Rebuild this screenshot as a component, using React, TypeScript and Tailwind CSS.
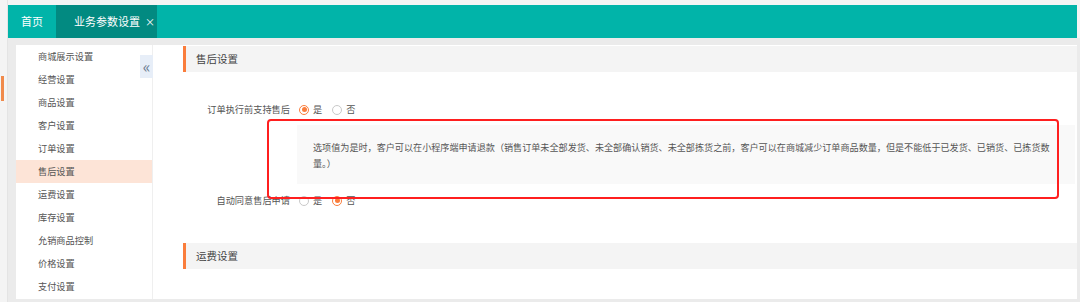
import React from 'react';

const menuItems = [
  '商城展示设置',
  '经营设置',
  '商品设置',
  '客户设置',
  '订单设置',
  '售后设置',
  '运费设置',
  '库存设置',
  '允销商品控制',
  '价格设置',
  '支付设置',
];

const font = { fontFamily: '"Noto Sans CJK SC", "Noto Sans", sans-serif' };

const Radio: React.FC<{ checked: boolean; label: string }> = ({ checked, label }) => (
  <span className="flex items-center">
    <span
      className={`w-[10px] h-[10px] rounded-full border flex items-center justify-center bg-white ${
        checked ? 'border-[#fa7d3c]' : 'border-[#c9c9c9]'
      }`}
    >
      {checked && <span className="w-[5px] h-[5px] rounded-full bg-[#fa7d3c]" />}
    </span>
    <span className="ml-[4px] text-[#555]">{label}</span>
  </span>
);

const OptionRow: React.FC<{ label: string; yes: boolean; className?: string }> = ({
  label,
  yes,
  className,
}) => (
  <div className={`flex items-center h-[16px] text-[9.2px] ${className ?? ''}`}>
    <div className="w-[107px] text-right text-[#555]">{label}</div>
    <div className="ml-[9px] flex items-center gap-[10px]">
      <Radio checked={yes} label="是" />
      <Radio checked={!yes} label="否" />
    </div>
  </div>
);

const SectionTitle: React.FC<{ title: string; className?: string }> = ({ title, className }) => (
  <div
    className={`h-[26px] border-l-[3px] border-[#fa7d3c] bg-[#f4f4f4] flex items-center pl-[10px] text-[10.5px] text-[#444] ${
      className ?? ''
    }`}
  >
    {title}
  </div>
);

export default function App() {
  return (
    <div className="w-[1080px] h-[302px] flex bg-[#f4f4f4] overflow-hidden" style={font}>
      {/* page edge */}
      <div className="w-[8px] shrink-0 border-r border-[#e4e4e4]">
        <div className="mt-[76px] ml-[1px] w-[3px] h-[25px] bg-[#f08a4b]" />
      </div>

      <div className="flex-1 flex flex-col pt-[5px]">
        {/* Tab bar */}
        <div className="h-[33px] bg-[#01b4a9] flex text-white text-[11px] mr-[3px]">
          <div className="w-[48px] flex items-center justify-center">首页</div>
          <div className="w-[101px] bg-[#028a81] flex items-center pl-[18px]">
            业务参数设置
            <span className="ml-[5px] text-[10px]">×</span>
          </div>
        </div>

        <div className="flex-1 flex bg-[#ebebeb] pt-[7px] pb-[3px] pl-[8px] pr-[3px]">
          {/* Sidebar */}
          <div className="relative w-[137px] bg-white border-r border-[#efefef]">
            {menuItems.map((item) => (
              <div
                key={item}
                className={`h-[23px] flex items-center pl-[22px] text-[9.2px] text-[#555] ${
                  item === '售后设置' ? 'bg-[#fde4d7]' : ''
                }`}
              >
                {item}
              </div>
            ))}
            <div className="absolute left-[124px] top-[10px] w-[13px] h-[23px] bg-[#e7eef8] flex items-center justify-center text-[#6b7c93] text-[16px] leading-none pb-[2px]">
              «
            </div>
          </div>

          {/* Content */}
          <div className="relative flex-1 bg-white pl-[30px]">
            <SectionTitle title="售后设置" className="mt-[1px]" />

            <OptionRow label="订单执行前支持售后" yes className="mt-[30px]" />

            <div className="ml-[114px] mr-[2px] mt-[7px] h-[59px] bg-[#f9f9f9] pt-[14px] pl-[16px] pr-[12px] text-[9.1px] leading-[16px] text-[#555]">
              选项值为是时，客户可以在小程序端申请退款（销售订单未全部发货、未全部确认销货、未全部拣货之前，客户可以在商城减少订单商品数量，但是不能低于已发货、已销货、已拣货数
              <br />
              量。）
            </div>

            <OptionRow label="自动同意售后申请" yes={false} className="mt-[9px]" />

            <SectionTitle title="运费设置" className="mt-[34px]" />

            {/* annotation */}
            <div className="absolute left-[114px] top-[74px] w-[792px] h-[80px] border-2 border-[#ff1f1f] rounded-[4px]" />
          </div>
        </div>
      </div>
    </div>
  );
}
